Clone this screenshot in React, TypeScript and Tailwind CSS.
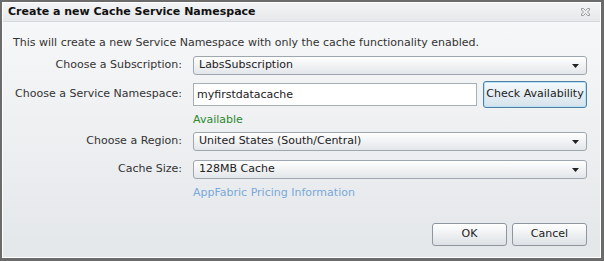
import React from 'react';

const font = { fontFamily: '"DejaVu Sans", Tahoma, "Liberation Sans", sans-serif' };

function Select({ value }: { value: string }) {
  return (
    <div className="flex h-[19px] items-center justify-between rounded-[3px] border border-[#9ea7b0] bg-gradient-to-b from-white to-[#e3e6ea] pl-[5px] pr-[7px] text-[11px] text-[#222]">
      <span>{value}</span>
      <svg width="7" height="4" viewBox="0 0 7 4">
        <path d="M0 0h7L3.5 4z" fill="#222" />
      </svg>
    </div>
  );
}

function Label({ children }: { children: React.ReactNode }) {
  return <div className="whitespace-nowrap text-right text-[11px] text-[#333]">{children}</div>;
}

function DialogButton({ children }: { children: React.ReactNode }) {
  return (
    <button className="h-[23px] w-[75px] rounded-[3px] border border-[#8e969e] bg-gradient-to-b from-white to-[#dde1e5] text-[11px] text-[#222]">
      {children}
    </button>
  );
}

export default function App() {
  return (
    <div
      className="flex h-[261px] w-[604px] bg-[#6b6b6b] pb-[3px] pl-[2px] pr-[3px] pt-[2px]"
      style={font}
    >
      <div className="flex flex-1 flex-col border border-white">
        {/* Title bar */}
        <div className="flex h-[19px] items-center justify-between border-b border-[#d6d9dd] bg-gradient-to-b from-[#f3f4f5] to-[#e6e8eb] pl-[5px] pr-[10px]">
          <span className="text-[11px] font-bold text-[#111]">Create a new Cache Service Namespace</span>
          <svg width="9" height="8" viewBox="0 0 9 8">
            <path
              d="M0.5 0.5h2l2 2 2-2h2v1.5l-2 2 2 2v1.5h-2l-2-2-2 2h-2v-1.5l2-2-2-2z"
              fill="none"
              stroke="#9a9a9a"
              strokeWidth="1"
            />
          </svg>
        </div>

        {/* Body */}
        <div className="flex flex-1 flex-col bg-gradient-to-b from-[#f6f7f8] to-[#e4e7ea] pl-[10px] pr-[13px] pt-[13px]">
          <p className="h-[16px] whitespace-nowrap text-[11px] leading-[16px] text-[#333]">
            This will create a new Service Namespace with only the cache functionality enabled.
          </p>

          <div className="mt-[5px] grid grid-cols-[169px_1fr] items-center gap-x-[11px]">
            <Label>Choose a Subscription:</Label>
            <Select value="LabsSubscription" />

            <div className="col-span-2 h-[5px]" />

            <Label>Choose a Service Namespace:</Label>
            <div className="flex h-[28px] items-center gap-[6px]">
              <input
                readOnly
                value="myfirstdatacache"
                className="h-[23px] min-w-0 flex-1 border border-[#a7aeb6] bg-white pl-[3px] text-[11px] text-[#222] outline-none"
                style={font}
              />
              <button className="h-[27px] w-[104px] whitespace-nowrap rounded-[3px] border border-[#4f7fa3] bg-gradient-to-b from-[#f4fafd] to-[#d6e2ea] text-[11px] text-[#222] shadow-[inset_0_0_0_1px_#b5e3f5]">
                Check Availability
              </button>
            </div>

            <div />
            <div className="mt-[4px] h-[16px] text-[11px] leading-[16px] text-[#2d8a2d]">Available</div>

            <div className="col-span-2 h-[4px]" />

            <Label>Choose a Region:</Label>
            <Select value="United States (South/Central)" />

            <div className="col-span-2 h-[9px]" />

            <Label>Cache Size:</Label>
            <Select value="128MB Cache" />

            <div />
            <div className="mt-[6px] h-[16px] text-[11px] leading-[16px] text-[#79a9d9]">
              AppFabric Pricing Information
            </div>
          </div>

          <div className="mt-[22px] flex justify-end gap-[5px]">
            <DialogButton>OK</DialogButton>
            <DialogButton>Cancel</DialogButton>
          </div>
        </div>
      </div>
    </div>
  );
}
